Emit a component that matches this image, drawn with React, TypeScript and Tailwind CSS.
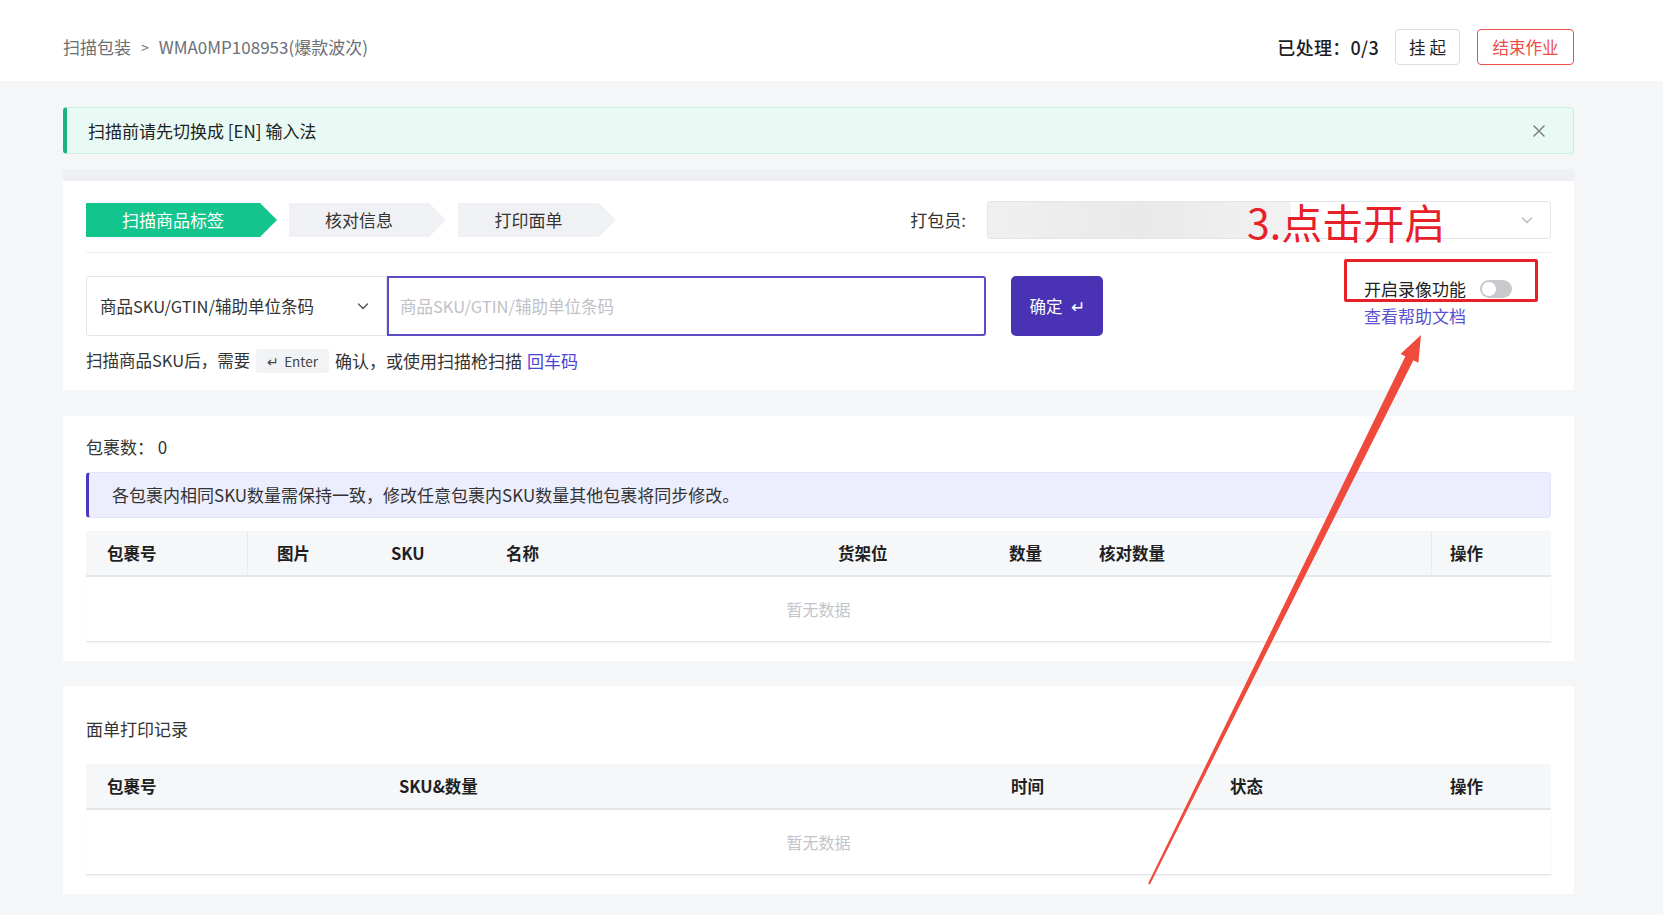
import React from "react";

const font = { fontFamily: '"Noto Sans CJK SC", "Noto Sans", sans-serif' };

function Chevron({ className = "" }: { className?: string }) {
  return (
    <svg className={className} width="14" height="14" viewBox="0 0 14 14" fill="none">
      <path d="M2.5 5 L7 9.5 L11.5 5" stroke="currentColor" strokeWidth="1.4" strokeLinecap="round" strokeLinejoin="round" />
    </svg>
  );
}

function Steps() {
  return (
    <div className="flex gap-[12px]">
      <div className="w-[191px] h-[34px] bg-[#13c48d] text-white flex items-center [clip-path:polygon(0_0,calc(100%_-_17px)_0,100%_50%,calc(100%_-_17px)_100%,0_100%)]">
        <span className="w-[174px] text-center text-[17px]">扫描商品标签</span>
      </div>
      <div className="w-[157px] h-[34px] bg-[#f0f1f4] text-[#333] flex items-center [clip-path:polygon(0_0,calc(100%_-_17px)_0,100%_50%,calc(100%_-_17px)_100%,0_100%)]">
        <span className="w-[140px] text-center text-[17px]">核对信息</span>
      </div>
      <div className="w-[158px] h-[34px] bg-[#f0f1f4] text-[#333] flex items-center [clip-path:polygon(0_0,calc(100%_-_17px)_0,100%_50%,calc(100%_-_17px)_100%,0_100%)]">
        <span className="w-[141px] text-center text-[17px]">打印面单</span>
      </div>
    </div>
  );
}

type Col = { label: string; w: number; pl: number; border?: boolean; borderL?: boolean };

function Table({ cols, divider }: { cols: Col[]; divider?: boolean }) {
  return (
    <div className="w-[1465px]">
      <div className="flex h-[46px] bg-[#f6f7f9] border-b-2 border-[#e6e7eb]">
        {cols.map((c, i) => (
          <div
            key={i}
            className={
              "flex items-center text-[16.5px] font-bold text-[#1f1f1f] h-full" +
              (c.border && divider ? " border-r border-[#ebecef]" : "") +
              (c.borderL && divider ? " border-l border-[#ebecef]" : "")
            }
            style={{ width: c.w, paddingLeft: c.pl }}
          >
            {c.label}
          </div>
        ))}
      </div>
      <div className="h-[65px] flex items-center justify-center text-[16px] text-[#c3c5cb] border-b border-[#e4e5ea] shadow-[0_1px_2px_rgba(0,0,0,0.06)]">
        暂无数据
      </div>
    </div>
  );
}

export default function App() {
  const cols1: Col[] = [
    { label: "包裹号", w: 162, pl: 21, border: true },
    { label: "图片", w: 122, pl: 29 },
    { label: "SKU", w: 115, pl: 21 },
    { label: "名称", w: 332, pl: 21 },
    { label: "货架位", w: 171, pl: 21 },
    { label: "数量", w: 90, pl: 21 },
    { label: "核对数量", w: 353, pl: 21 },
    { label: "操作", w: 120, pl: 18, borderL: true },
  ];
  const cols2: Col[] = [
    { label: "包裹号", w: 292, pl: 21 },
    { label: "SKU&数量", w: 612, pl: 21 },
    { label: "时间", w: 219, pl: 21 },
    { label: "状态", w: 222, pl: 21 },
    { label: "操作", w: 120, pl: 19 },
  ];

  return (
    <div style={font} className="relative w-full min-h-[915px] bg-[#f5f6f8] text-[#333] overflow-hidden">
      {/* Header */}
      <div className="h-[81px] bg-white pl-[63px] pr-[89px] pt-[29px] flex items-start justify-between">
        <div className="h-[36px] flex items-center text-[17px] text-[#6b6f76]">
          <span>扫描包装</span>
          <span className="mx-[10px] text-[14px]">&gt;</span>
          <span>WMA0MP108953(爆款波次)</span>
        </div>
        <div className="flex items-center h-[36px]">
          <span className="text-[18px] font-medium text-[#1d1d1f] mr-[16px] tracking-[0.3px]">已处理：0/3</span>
          <button className="h-[36px] w-[65px] border border-[#dcdee3] rounded-[4px] bg-white text-[16.5px] text-[#222] tracking-[4px] pl-[4px]">
            挂起
          </button>
          <button className="ml-[17px] h-[36px] w-[97px] border border-[#f2504a] rounded-[4px] bg-white text-[16.5px] text-[#ef4b46]">
            结束作业
          </button>
        </div>
      </div>

      {/* Content */}
      <div className="pl-[63px] pr-[89px] pt-[26px]">
        {/* Alert */}
        <div className="h-[47px] flex items-center justify-between bg-[#e8faf3] border border-[#c8efdf] border-l-[4px] border-l-[#19b482] rounded-[4px] pl-[21px] pr-[27px]">
          <span className="text-[17px] text-[#222]">扫描前请先切换成 [EN] 输入法</span>
          <svg width="14" height="14" viewBox="0 0 14 14">
            <path d="M2 2 L12 12 M12 2 L2 12" stroke="#7d8087" strokeWidth="1.5" strokeLinecap="round" />
          </svg>
        </div>

        <div className="mt-[15px] h-[12px] bg-[#eef0f3]" />

        {/* Card 1 */}
        <div className="bg-white h-[209px] px-[23px] pt-[20px]">
          <div className="flex items-center justify-between">
            <Steps />
            <div className="flex items-center">
              <span className="text-[17px] text-[#333] mr-[21px]">打包员:</span>
              <div className="relative w-[564px] h-[38px] border border-[#e3e5ea] rounded-[3px] bg-white flex items-center justify-end pr-[16px] text-[#b5b8bf]">
                <div className="absolute left-0 top-0 h-full w-[303px] rounded-[3px] bg-gradient-to-r from-[#f0f0f1] via-[#e9e9ea] to-[#f2f2f3]" />
                <Chevron />
              </div>
            </div>
          </div>
          <div className="mt-[13px] border-t border-[#eceef1]" />
          <div className="mt-[23px] flex items-start">
            <div className="flex">
              <div className="w-[301px] h-[60px] border border-[#e3e5ea] rounded-l-[3px] flex items-center justify-between pl-[13px] pr-[16px] text-[16.5px] text-[#333]">
                <span>商品SKU/GTIN/辅助单位条码</span>
                <Chevron className="text-[#555]" />
              </div>
              <div className="w-[599px] h-[60px] border-2 border-[#5a4bc6] rounded-r-[3px] flex items-center pl-[11px] text-[16.5px] text-[#bfc1c7]">
                商品SKU/GTIN/辅助单位条码
              </div>
            </div>
            <button className="ml-[25px] w-[92px] h-[60px] rounded-[5px] bg-[#4933b4] text-white text-[16.5px] flex items-center justify-center gap-[8px]">
              <span>确定</span>
              <span className="text-[17px]">↵</span>
            </button>
            <div className="ml-auto mr-[39px] pt-[2px] flex flex-col">
              <div className="flex items-center h-[22px]">
                <span className="text-[17px] text-[#222]">开启录像功能</span>
                <div className="ml-[14px] w-[32px] h-[18px] rounded-full bg-[#c8c9cc] p-[2px] flex items-center">
                  <div className="w-[14px] h-[14px] rounded-full bg-white" />
                </div>
              </div>
              <span className="mt-[3px] text-[17px] text-[#5b52cf]">查看帮助文档</span>
            </div>
          </div>
          <div className="mt-[12px] flex items-center text-[16.5px] text-[#333]">
            <span>扫描商品SKU后，需要</span>
            <span className="mx-[6px] h-[24px] px-[11px] rounded-[3px] bg-[#f2f3f5] text-[13.5px] text-[#444] flex items-center gap-[5px]">
              <span>↵</span>
              <span>Enter</span>
            </span>
            <span className="text-[17px]">确认，或使用扫描枪扫描</span>
            <span className="ml-[5px] text-[17px] text-[#4a44d4]">回车码</span>
          </div>
        </div>

        {/* Card 2 */}
        <div className="mt-[26px] bg-white h-[245px] px-[23px] pt-[19px]">
          <div className="h-[24px] flex items-center text-[17px] text-[#333]">包裹数：&nbsp;0</div>
          <div className="mt-[13px] h-[46px] flex items-center bg-[#eceefd] border border-[#e1e4fb] border-l-[3px] border-l-[#4a38c0] rounded-[4px] pl-[23px] text-[17px] text-[#333]">
            各包裹内相同SKU数量需保持一致，修改任意包裹内SKU数量其他包裹将同步修改。
          </div>
          <div className="mt-[13px]">
            <Table cols={cols1} divider />
          </div>
        </div>

        {/* Card 3 */}
        <div className="mt-[25px] bg-white h-[208px] px-[23px] pt-[31px]">
          <div className="h-[24px] flex items-center text-[17px] text-[#333]">面单打印记录</div>
          <div className="mt-[23px]">
            <Table cols={cols2} />
          </div>
        </div>
      </div>

      {/* Annotation overlays */}
      <div className="absolute left-[1247px] top-[193px] text-[41px] leading-[56px] text-[#e8202a]">3.点击开启</div>
      <div className="absolute left-[1344px] top-[259px] w-[194px] h-[43px] border-[3px] border-[#e8202a] rounded-[2px]" />
      <svg className="absolute left-0 top-0 pointer-events-none" width="1663" height="915" viewBox="0 0 1663 915">
        <polygon
          points="1148.1,883.6 1405.4,356.3 1400.5,353.9 1421,335 1418.4,362.7 1413.4,360.3 1149.9,884.4"
          fill="#ef4a3c"
        />
      </svg>
    </div>
  );
}
